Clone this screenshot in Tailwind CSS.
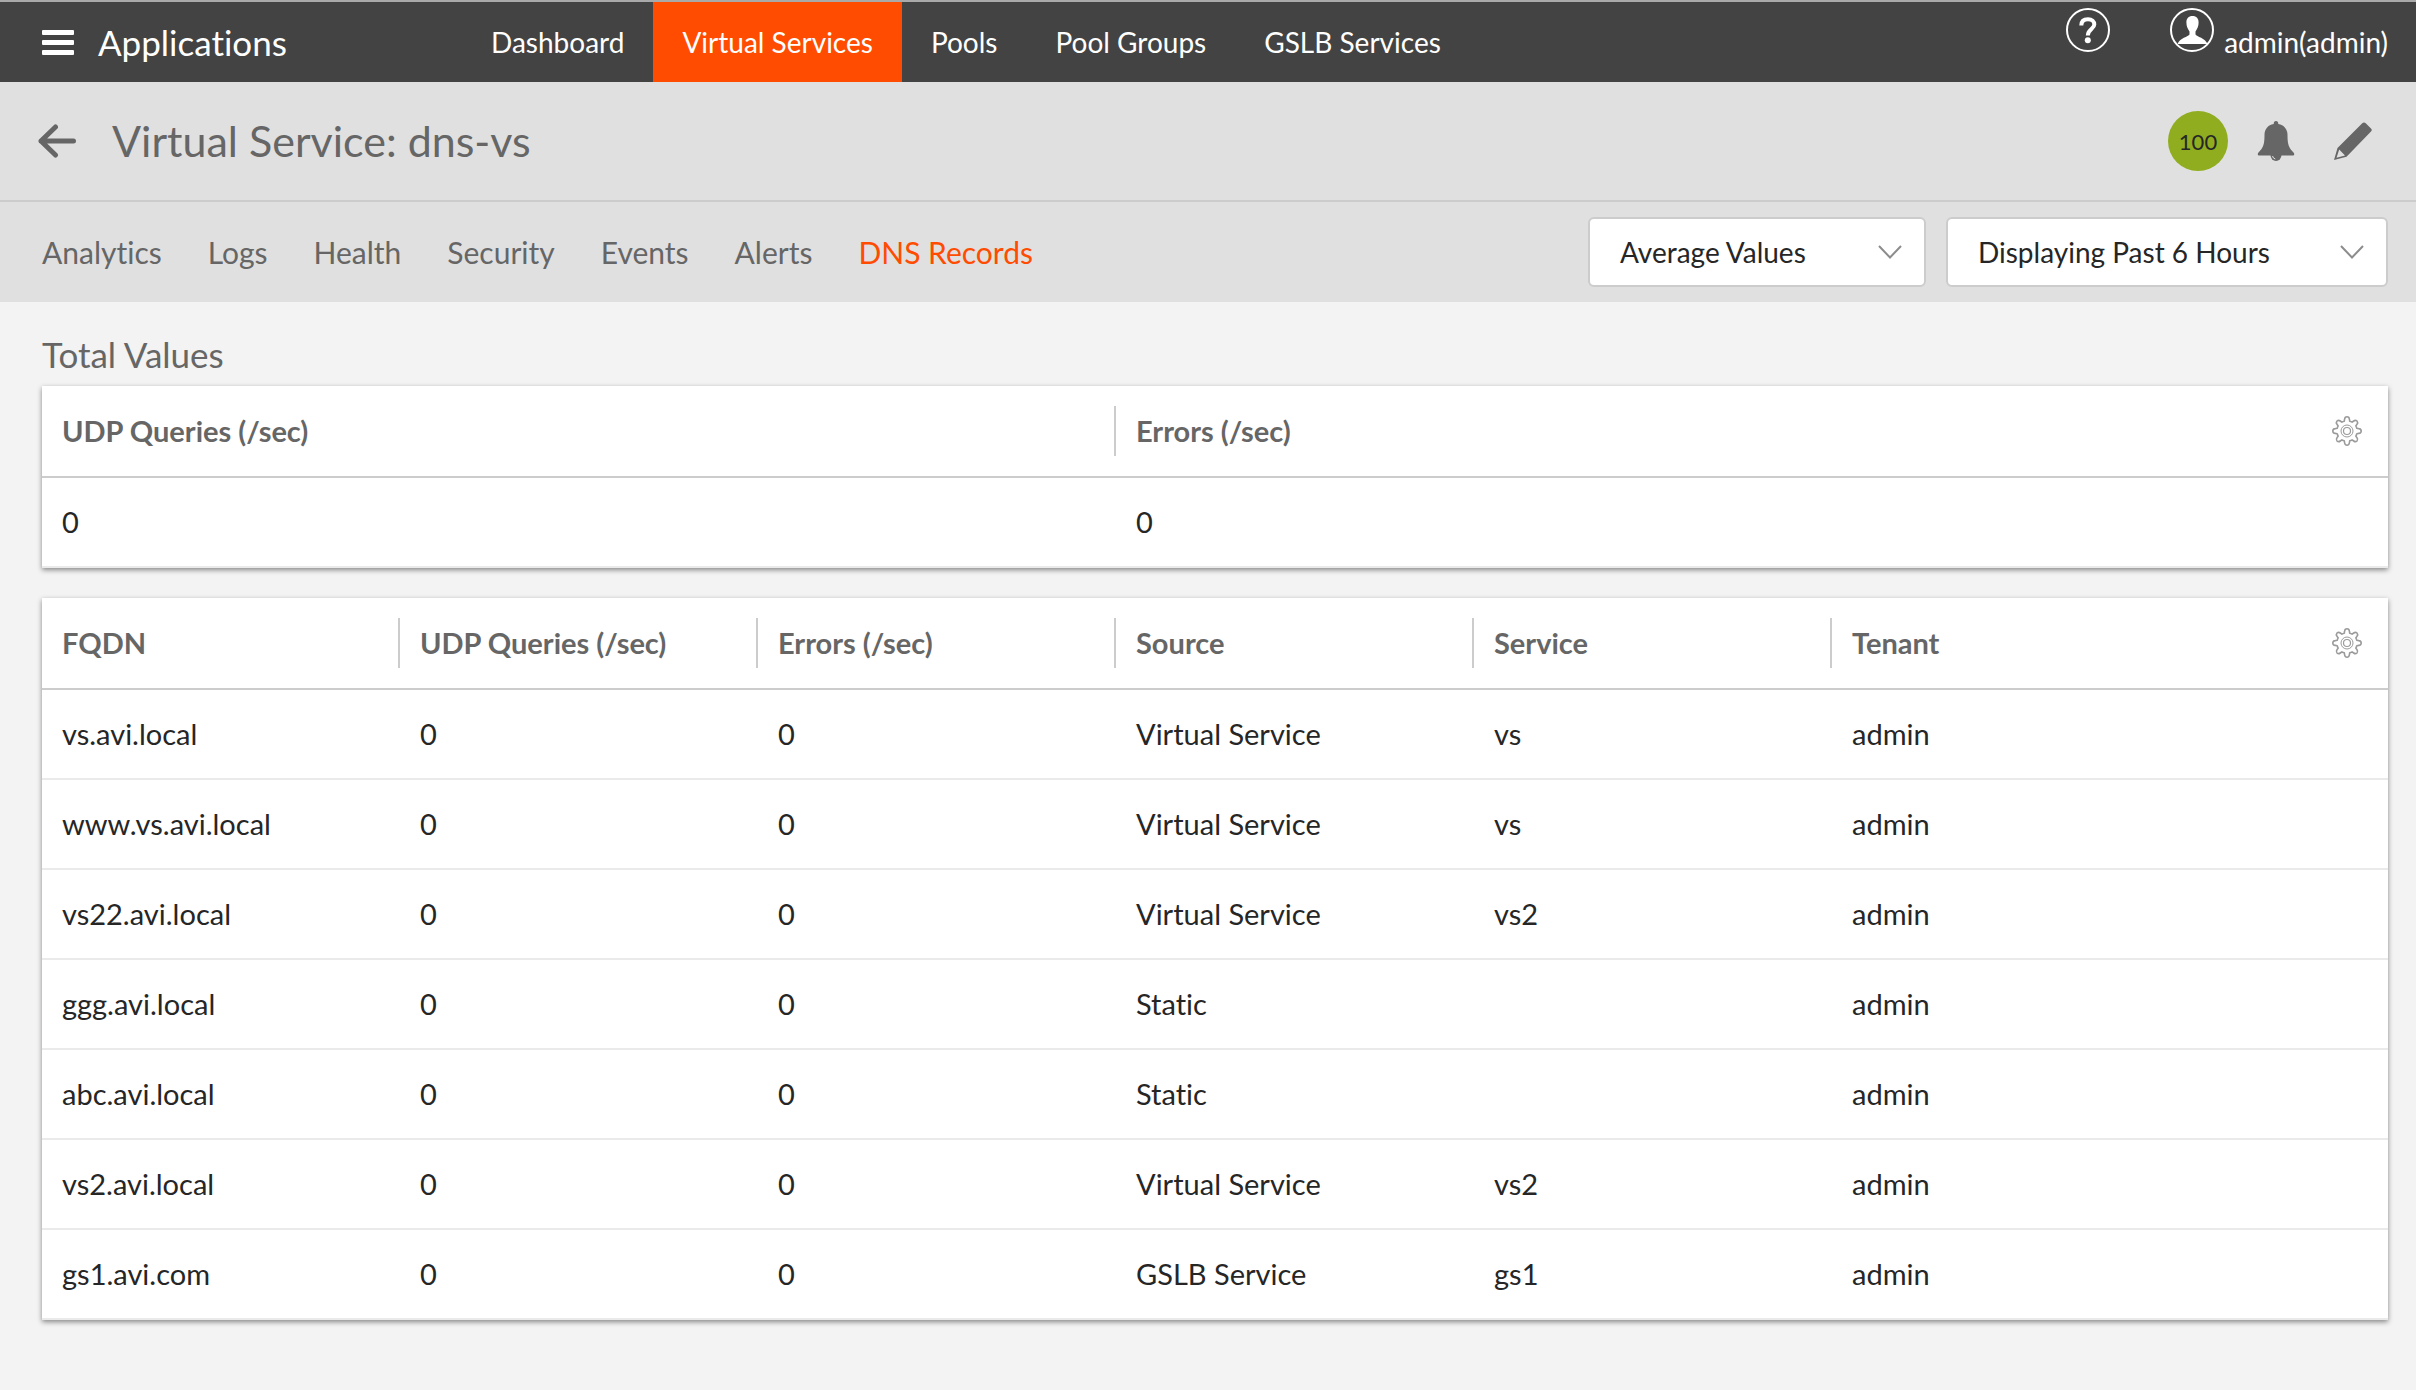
<!DOCTYPE html>
<html lang="en">
<head>
<meta charset="utf-8">
<meta name="viewport" content="width=device-width, initial-scale=1">
<title>Virtual Service: dns-vs</title>
<script src="https://cdn.jsdelivr.net/npm/@tailwindcss/browser@4"></script>
</head>
<body class="min-h-screen bg-[#f3f3f3] font-['Lato',sans-serif] text-[29px] text-[#262626] [font-variant-ligatures:no-common-ligatures]">

<svg class="hidden" aria-hidden="true">
  <symbol id="gear" viewBox="0 0 30 30">
    <g fill="none" stroke="#9b9b9b">
      <path stroke-width="1.6" stroke-linejoin="round" d="M12.6 3.2Q12.800 .8 15 .8Q17.200 .8 17.400 3.200L17.700 5.200Q19 5.500 20.100 6.200L21.700 5Q23.400 3.700 25 5Q26.300 6.600 25 8.300L23.800 9.900Q24.500 11 24.800 12.300L26.800 12.600Q29.200 12.800 29.200 15Q29.200 17.200 26.800 17.400L24.800 17.700Q24.500 19 23.800 20.100L25 21.700Q26.300 23.400 25 25Q23.400 26.300 21.700 25L20.100 23.800Q19 24.500 17.700 24.800L17.400 26.800Q17.200 29.200 15 29.200Q12.800 29.200 12.600 26.800L12.300 24.800Q11 24.500 9.900 23.800L8.300 25Q6.600 26.300 5 25Q3.700 23.400 5 21.700L6.200 20.100Q5.500 19 5.200 17.700L3.200 17.400Q.8 17.200 .8 15Q.8 12.800 3.200 12.600L5.200 12.300Q5.500 11 6.200 9.900L5 8.300Q3.700 6.600 5 5Q6.600 3.700 8.300 5L9.900 6.200Q11 5.500 12.300 5.200Z"/>
      <circle cx="15" cy="15" r="6"/>
      <circle cx="15" cy="15" r="3.500" stroke-width="1.2"/>
    </g>
  </symbol>
</svg>

<header class="flex h-[82px] border-t-2 border-[#a9a9a9] bg-[#434343] text-[28px] text-white">
  <div class="flex w-[462px] shrink-0 items-center gap-6 pl-[42px]">
    <button type="button" aria-label="Menu" class="flex w-8 flex-col gap-[5px]">
      <span class="h-[5px] w-full rounded-[1px] bg-white"></span>
      <span class="h-[5px] w-full rounded-[1px] bg-white"></span>
      <span class="h-[5px] w-full rounded-[1px] bg-white"></span>
    </button>
    <span class="text-[35px]">Applications</span>
  </div>
  <nav class="flex" aria-label="Applications">
    <a href="#" class="flex items-center px-[29px]">Dashboard</a>
    <a href="#" class="flex items-center bg-[#ff4c00] px-[29px]" aria-current="page">Virtual Services</a>
    <a href="#" class="flex items-center px-[29px]">Pools</a>
    <a href="#" class="flex items-center px-[29px]">Pool Groups</a>
    <a href="#" class="flex items-center px-[29px]">GSLB Services</a>
  </nav>
  <div class="ml-auto flex gap-[60px] pr-7">
    <button type="button" aria-label="Help" class="mt-1.5 size-[44px]">
      <svg viewBox="0 0 44 44" class="size-[44px]" fill="none" stroke="#fff">
        <circle cx="22" cy="22" r="21" stroke-width="2"/>
        <path stroke-width="4" d="M15.300 17.500C15.300 13 18 11.200 22 11.200C26 11.200 28.300 13.300 28.300 16.500C28.300 21 21.800 21.200 21.800 27.500"/>
        <circle cx="21.800" cy="32.300" r="3" fill="#fff" stroke="none"/>
      </svg>
    </button>
    <button type="button" class="flex gap-2.5">
      <svg viewBox="0 0 44 44" class="mt-1.5 size-[44px]" fill="#fff" aria-hidden="true">
        <circle cx="22" cy="22" r="21" fill="none" stroke="#fff" stroke-width="2"/>
        <path d="M22.500 8C18.500 8 16.400 10.600 16.400 14.500C16.400 18.500 17.800 21 19.500 23.500V26.500C18.500 28.800 9.500 30 7.600 36H37.400C35.500 30 26.500 28.800 25.500 26.500V23.500C27.200 21 28.600 18.500 28.600 14.500C28.600 10.600 26.500 8 22.500 8Z"/>
      </svg>
      <span class="leading-[80px]">admin(admin)</span>
    </button>
  </div>
</header>

<div class="flex h-[120px] items-center border-b-2 border-[#ccc] bg-[#e0e0e0] pr-[44px] pl-[38px] text-[#666]">
  <button type="button" aria-label="Back">
    <svg viewBox="0 0 38 34" class="h-[34px] w-[38px]" fill="none" stroke="#666" stroke-width="5" stroke-linecap="round" stroke-linejoin="round">
      <path d="M35.500 17H3M17.500 3L3 17L17.500 31"/>
    </svg>
  </button>
  <h1 class="ml-9 text-[43px]">Virtual Service: dns-vs</h1>
  <div class="ml-auto flex items-center">
    <span class="flex size-[60px] items-center justify-center rounded-full bg-[#8fad1f] text-[22px] text-[#262626]">100</span>
    <button type="button" aria-label="Alerts" class="ml-[29px]">
      <svg viewBox="0 0 38 40" class="h-10 w-[38px]" fill="#666">
        <path d="M19 0C17.500 0 16.700 1 16.700 3C11 4 7.500 8 7.500 14C7.500 24 6 27 1.500 31.500C.3 32.800 .5 34.500 2.500 34.500H35.500C37.500 34.500 37.700 32.800 36.500 31.500C32 27 30.500 24 30.500 14C30.500 8 27 4 21.300 3C21.300 1 20.500 0 19 0Z"/>
        <path d="M13.500 34A5.500 6 0 0 0 24.500 34Z"/>
        <path d="M15.500 35Q16 37.500 18.300 38" fill="none" stroke="#e0e0e0"/>
      </svg>
    </button>
    <button type="button" aria-label="Edit" class="ml-[39px]">
      <svg viewBox="0 0 38 38" class="size-[38px]" fill="#666">
        <path fill-rule="evenodd" d="M28 1.500Q30 -.5 32 1.500L37 6.500Q38.500 8 37 9.500L12.500 34.800L0 38L3.500 26ZM5.200 27.500L2.500 35.700L11 33.600Z"/>
      </svg>
    </button>
  </div>
</div>

<div class="flex h-[100px] items-center bg-[#e0e0e0] pr-7 pl-[42px]">
  <nav class="flex gap-[46px] text-[30px] text-[#666]" aria-label="Virtual service">
    <a href="#">Analytics</a>
    <a href="#">Logs</a>
    <a href="#">Health</a>
    <a href="#">Security</a>
    <a href="#">Events</a>
    <a href="#">Alerts</a>
    <a href="#" class="text-[#ff4c00]" aria-current="page">DNS Records</a>
  </nav>
  <div class="ml-auto flex gap-5 text-[28px]">
    <div class="relative">
      <select aria-label="Value type" class="h-[70px] w-[338px] appearance-none rounded-md border-2 border-[#ccc] bg-white pl-[30px]">
        <option>Average Values</option>
      </select>
      <svg viewBox="0 0 24 14" class="pointer-events-none absolute top-7 right-6 h-[14px] w-6" fill="none" stroke="#8c8c8c" stroke-width="2" aria-hidden="true"><path d="M1 1L12 12.500L23 1"/></svg>
    </div>
    <div class="relative">
      <select aria-label="Time range" class="h-[70px] w-[442px] appearance-none rounded-md border-2 border-[#ccc] bg-white pl-[30px]">
        <option>Displaying Past 6 Hours</option>
      </select>
      <svg viewBox="0 0 24 14" class="pointer-events-none absolute top-7 right-6 h-[14px] w-6" fill="none" stroke="#8c8c8c" stroke-width="2" aria-hidden="true"><path d="M1 1L12 12.500L23 1"/></svg>
    </div>
  </div>
</div>

<main class="pt-8 pr-7 pl-[42px]">
  <h2 class="mb-3 text-[35px] leading-10 text-[#666]">Total Values</h2>

  <table class="mb-[30px] w-full table-fixed border-separate border-spacing-0 bg-white text-left shadow-[0_2px_5px_rgba(0,0,0,0.45)]">
    <thead class="text-[#666]">
      <tr class="h-[92px] *:border-b-2 *:border-[#ccc]">
        <th scope="col"><div class="h-[50px] border-r-2 border-[#ccc] px-5 leading-[50px]">UDP Queries (/sec)</div></th>
        <th scope="col"><div class="px-5 leading-[50px]">Errors (/sec)</div></th>
        <th class="w-[198px]"><button type="button" aria-label="Column settings" class="ml-auto mr-[26px] block"><svg class="size-[30px]"><use href="#gear"/></svg></button></th>
      </tr>
    </thead>
    <tbody>
      <tr class="h-[90px] *:border-b-2 *:border-[#eaeaea] *:px-5"><td>0</td><td>0</td><td></td></tr>
    </tbody>
  </table>

  <table class="w-full table-fixed border-separate border-spacing-0 bg-white text-left shadow-[0_2px_5px_rgba(0,0,0,0.45)]">
    <thead class="text-[#666]">
      <tr class="h-[92px] *:border-b-2 *:border-[#ccc]">
        <th scope="col"><div class="h-[50px] border-r-2 border-[#ccc] px-5 leading-[50px]">FQDN</div></th>
        <th scope="col"><div class="h-[50px] border-r-2 border-[#ccc] px-5 leading-[50px]">UDP Queries (/sec)</div></th>
        <th scope="col"><div class="h-[50px] border-r-2 border-[#ccc] px-5 leading-[50px]">Errors (/sec)</div></th>
        <th scope="col"><div class="h-[50px] border-r-2 border-[#ccc] px-5 leading-[50px]">Source</div></th>
        <th scope="col"><div class="h-[50px] border-r-2 border-[#ccc] px-5 leading-[50px]">Service</div></th>
        <th scope="col"><div class="px-5 leading-[50px]">Tenant</div></th>
        <th class="w-[198px]"><button type="button" aria-label="Column settings" class="ml-auto mr-[26px] block"><svg class="size-[30px]"><use href="#gear"/></svg></button></th>
      </tr>
    </thead>
    <tbody>
      <tr class="h-[90px] *:border-b-2 *:border-[#eaeaea] *:px-5"><td>vs.avi.local</td><td>0</td><td>0</td><td>Virtual Service</td><td>vs</td><td>admin</td><td></td></tr>
      <tr class="h-[90px] *:border-b-2 *:border-[#eaeaea] *:px-5"><td>www.vs.avi.local</td><td>0</td><td>0</td><td>Virtual Service</td><td>vs</td><td>admin</td><td></td></tr>
      <tr class="h-[90px] *:border-b-2 *:border-[#eaeaea] *:px-5"><td>vs22.avi.local</td><td>0</td><td>0</td><td>Virtual Service</td><td>vs2</td><td>admin</td><td></td></tr>
      <tr class="h-[90px] *:border-b-2 *:border-[#eaeaea] *:px-5"><td>ggg.avi.local</td><td>0</td><td>0</td><td>Static</td><td></td><td>admin</td><td></td></tr>
      <tr class="h-[90px] *:border-b-2 *:border-[#eaeaea] *:px-5"><td>abc.avi.local</td><td>0</td><td>0</td><td>Static</td><td></td><td>admin</td><td></td></tr>
      <tr class="h-[90px] *:border-b-2 *:border-[#eaeaea] *:px-5"><td>vs2.avi.local</td><td>0</td><td>0</td><td>Virtual Service</td><td>vs2</td><td>admin</td><td></td></tr>
      <tr class="h-[90px] *:border-b-2 *:border-[#eaeaea] *:px-5"><td>gs1.avi.com</td><td>0</td><td>0</td><td>GSLB Service</td><td>gs1</td><td>admin</td><td></td></tr>
    </tbody>
  </table>
</main>
</body>
</html>
